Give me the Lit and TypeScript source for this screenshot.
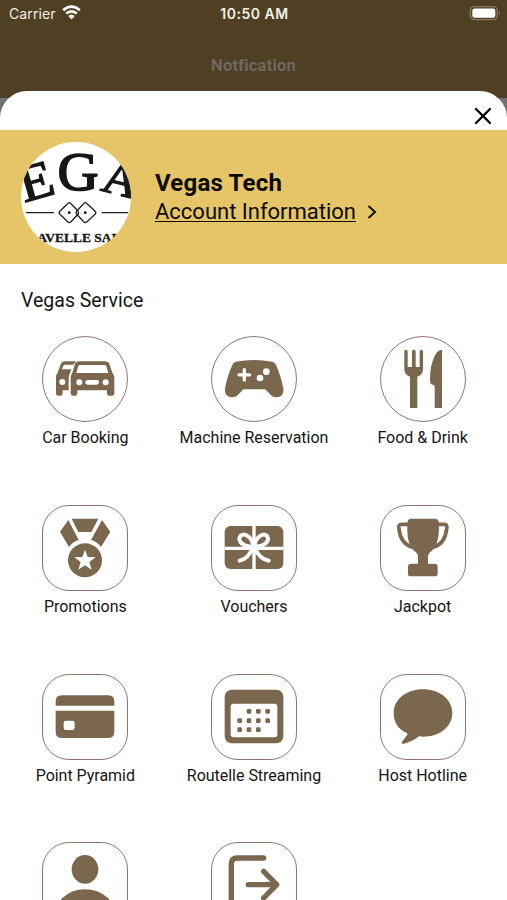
import { LitElement, html, svg, css, nothing, type SVGTemplateResult } from "lit";
import { customElement, property } from "lit/decorators.js";

interface Service {
  label?: string;
  round?: boolean;
  viewBox: string;
  art: SVGTemplateResult;
}

const dots = [
  [657, 138], [685, 138], [713, 138],
  [629, 166], [657, 166], [685, 166], [713, 166],
  [629, 193], [657, 193], [685, 193],
];

const services: Service[] = [
  {
    label: "Car Booking",
    round: true,
    viewBox: "37 19 258 258",
    art: svg`
      <path class="ink" d="M139 95H107Q97 95 93 104L84 129Q79 134 79 143V190Q79 198 86 198H93Q99 198 99 190V182H117V147Q117 138 121 131L125 119H97L101 108Q103 105 107 105H131Z"/>
      <circle class="paper" cx="98" cy="157" r="9"/>
      <path class="ink" fill-rule="evenodd" d="M149 95H225Q236 95 240 105L248 129Q254 135 254 144V190Q254 198 247 198H239Q232 198 232 190V182H143V190Q143 198 136 198H130Q123 198 123 190V144Q123 135 128 129L135 105Q138 95 149 95ZM151 106Q147 106 146 110L140 130H236L230 110Q229 106 225 106Z"/>
      <circle class="paper" cx="149" cy="158" r="9"/>
      <circle class="paper" cx="228" cy="158" r="9"/>
      <rect class="paper" x="167" y="151" width="41" height="14" rx="7"/>`,
  },
  {
    label: "Machine Reservation",
    round: true,
    viewBox: "123 19 258 258",
    art: svg`
      <path class="ink" d="M197 96Q252 86 307 96Q315 98 318 106Q332 136 340 176Q343 202 320 203Q307 203 300 194L286 179H220L206 194Q199 203 186 203Q162 202 165 176Q173 136 187 106Q190 98 197 96Z"/>
      <path class="cut" stroke-width="10" d="M223 120V151M207 135.500H239"/>
      <circle class="paper" cx="289" cy="126" r="10"/>
      <circle class="paper" cx="270" cy="145" r="10"/>`,
  },
  {
    label: "Food & Drink",
    round: true,
    viewBox: "44 19 258 258",
    art: svg`
      <path class="ink" d="M117 66Q117 60 122 60Q127 60 127 66V112H140V66Q140 60 145.500 60Q151 60 151 66V112H163V66Q163 60 168 60Q173 60 173 66V118Q173 135 156 141V235H134V141Q117 135 117 118Z"/>
      <path class="ink" d="M230 61V235H208V168L197 163Q194 160 194 150Q194 105 209 77Q218 60 230 61Z"/>`,
  },
  {
    label: "Promotions",
    viewBox: "37 21 258 258",
    art: svg`
      <path class="ink" d="M126 62H206L185 102H146ZM116 66L147 126Q130 131 118 147L91 101ZM217 66L242 101L214 147Q202 131 184 126Z"/>
      <circle class="ink" cx="166" cy="187" r="51"/>
      <path class="paper" d="M166 155L174 177L198 178L179 192L186 215L166 202L146 215L153 192L134 178L158 177Z"/>`,
  },
  {
    label: "Vouchers",
    viewBox: "33 21 258 258",
    art: svg`
      <rect class="ink" x="74" y="84" width="176" height="129" rx="17"/>
      <path class="cut butt" stroke-width="10" d="M162 84V213M74 151H250"/>
      <path class="ink" d="M125 116Q127 112 136 115Q151 121 155 141Q132 143 124 128Q121 121 125 116ZM197 116Q195 112 188 115Q173 121 169 141Q191 143 199 128Q202 121 197 116Z"/>
      <path class="cut" stroke-width="12" d="M159 146Q133 146 122 133Q114 122 122 113Q132 105 146 116Q158 126 160 145Q146 182 119 188M165 146Q190 146 200 133Q208 122 200 113Q190 105 177 116Q165 126 163 145Q176 182 206 188"/>`,
  },
  {
    label: "Jackpot",
    viewBox: "44 21 258 258",
    art: svg`
      <path class="line" stroke-width="11" d="M132 79H108Q98 79 101 93Q106 138 142 148M213 79H237Q247 79 244 93Q239 138 203 148"/>
      <path class="ink" d="M127 70Q128 62 137 62H210Q218 62 220 70Q225 135 200 158Q188 165 188 176V197H208Q217 197 217 206V229Q217 235 211 235H134Q128 235 128 229V206Q128 197 138 197H158V176Q158 165 146 158Q121 135 127 70Z"/>`,
  },
  {
    label: "Point Pyramid",
    viewBox: "37 26 258 258",
    art: svg`
      <path class="ink" d="M78 121V108Q78 90 96 90H236Q254 90 254 108V121ZM78 136H254V199Q254 218 235 218H97Q78 218 78 199Z"/>
      <rect class="paper" x="102" y="166" width="33" height="28" rx="7"/>`,
  },
  {
    label: "Routelle Streaming",
    viewBox: "543 26 258 258",
    art: svg`
      <rect class="ink" x="584" y="73" width="176" height="161" rx="21"/>
      <rect class="paper" x="602" y="115" width="140" height="101" rx="9"/>
      ${dots.map(([x, y]) => svg`<rect class="ink" x=${x - 7} y=${y - 7} width="14" height="14" rx="4"/>`)}`,
  },
  {
    label: "Host Hotline",
    viewBox: "1049 26 258 258",
    art: svg`
      <path class="ink" d="M1178 72C1228 72 1266 103 1266 143C1266 184 1228 214 1178 214L1166 213Q1145 230 1120 235Q1112 236 1115 229L1131 208L1131 204C1104 193 1090 170 1090 143C1090 103 1128 72 1178 72Z"/>`,
  },
  {
    viewBox: "37 532 258 258",
    art: svg`
      <ellipse class="ink" cx="166" cy="614" rx="40" ry="43"/>
      <path class="ink" d="M86 738Q86 714 97 701Q125 674 166 674Q207 674 236 701Q247 714 247 738Z"/>`,
  },
  {
    viewBox: "543 532 258 258",
    art: svg`
      <path class="line" stroke-width="16" d="M701 580H622Q604 580 604 598V722Q604 740 622 740H701M655 660H740M701 620L740 660L701 700"/>`,
  },
];

@customElement("service-tile")
export class ServiceTile extends LitElement {
  @property({ attribute: false }) service!: Service;

  static styles = css`
    :host { display: flex; flex-direction: column; align-items: center; }
    .frame {
      box-sizing: border-box;
      width: 86px;
      height: 86px;
      border: 1.3px solid #94736f;
      border-radius: 27px;
    }
    .round { border-radius: 50%; }
    .icon { display: block; width: 86px; height: 86px; margin: -1px; }
    .ink { fill: #7a674d; }
    .paper { fill: #fff; }
    .cut, .line { fill: none; stroke: #fff; stroke-linecap: round; stroke-linejoin: round; }
    .line { stroke: #7a674d; }
    .butt { stroke-linecap: butt; }
    .label {
      margin-top: 6px;
      font-size: 16px;
      line-height: 20px;
      letter-spacing: -0.02px;
      color: #151515;
      white-space: nowrap;
    }
  `;

  render() {
    const s = this.service;
    return html`
      <div class="frame ${s.round ? "round" : ""}">
        <svg class="icon" viewBox=${s.viewBox}>${s.art}</svg>
      </div>
      ${s.label ? html`<div class="label">${s.label}</div>` : nothing}
    `;
  }
}

@customElement("app-root")
export class AppRoot extends LitElement {
  static styles = css`
    :host {
      display: flex;
      flex-direction: column;
      box-sizing: border-box;
      width: 100%;
      height: 900px;
      overflow: hidden;
      background: linear-gradient(#4f4024 98.500px, #747172 98.500px);
      font-family: Roboto, sans-serif;
      color: #0c0b06;
    }
    .status {
      display: grid;
      grid-template-columns: 1fr auto 1fr;
      align-items: center;
      height: 27px;
      flex: none;
      padding: 0 7px 0 9px;
      font-family: Inter, sans-serif;
      font-size: 14px;
      color: #f4efe5;
    }
    .carrier { display: flex; align-items: center; gap: 6px; letter-spacing: 0.1px; }
    .wifi { width: 19px; height: 15px; margin-top: -2px; }
    .time { font-weight: 600; letter-spacing: 0.5px; }
    .battery { justify-self: end; width: 32px; height: 16px; margin: -1px -1px 0 0; }
    .nav {
      flex: none;
      height: 64px;
      box-sizing: border-box;
      padding-top: 29px;
      text-align: center;
      font-size: 16.500px;
      line-height: 20px;
      font-weight: 600;
      letter-spacing: 0.2px;
      color: #716b62;
    }
    .sheet {
      flex: 1;
      min-height: 0;
      overflow: hidden;
      background: #fff;
      border-radius: 27px 27px 0 0;
    }
    .top { display: flex; justify-content: flex-end; height: 39px; }
    .close { width: 18px; height: 18px; margin: 15.500px 15.500px 0 0; }
    .account {
      display: flex;
      align-items: center;
      gap: 24px;
      height: 134px;
      padding-left: 21px;
      background: #e5c568;
    }
    .avatar { width: 110px; height: 110px; }
    .serif { font-family: "Liberation Serif", serif; fill: #17171a; }
    .name { font-size: 24px; line-height: 28px; font-weight: 700; letter-spacing: 0.2px; }
    .link { display: flex; align-items: center; gap: 11px; margin-top: 1px; font-size: 22px; line-height: 28px; }
    .linktext {
      letter-spacing: -0.01px;
      text-decoration: underline;
      text-decoration-thickness: 1px;
      text-underline-offset: 2px;
      text-decoration-skip-ink: none;
    }
    .chevron { width: 10px; height: 16px; }
    .heading {
      padding: 25px 0 0 21px;
      font-size: 19.500px;
      line-height: 24px;
      color: #151515;
    }
    .grid {
      display: grid;
      grid-template-columns: repeat(3, 168.670px);
      grid-auto-rows: 168.670px;
      margin: 23.300px 0 0 1px;
    }
  `;

  render() {
    return html`
      <div class="status">
        <div class="carrier">
          <span>Carrier</span>
          <svg class="wifi" viewBox="0 0 19 15" fill="none" stroke="#fff" stroke-width="2.600">
            <path d="M1.200 5.300Q9.500 -2 17.800 5.300M4.200 8.600Q9.500 4 14.800 8.600"/>
            <path d="M6.300 11Q9.500 8 12.700 11L9.500 14.500Z" fill="#fff" stroke="none"/>
          </svg>
        </div>
        <div class="time">10:50 AM</div>
        <svg class="battery" viewBox="0 0 32 16">
          <rect x="1.300" y="1.600" width="27" height="13" rx="4" fill="none" stroke="#847a5e" stroke-width="1.300"/>
          <rect x="3.300" y="3.500" width="23" height="9.300" rx="2.300" fill="#fff"/>
          <path d="M30 6Q32 8 30 10Z" fill="#847a5e"/>
        </svg>
      </div>
      <div class="nav">Notfication</div>
      <div class="sheet">
        <div class="top">
          <svg class="close" viewBox="0 0 18 18" stroke="#000" stroke-width="2.300" stroke-linecap="round">
            <path d="M2 2L16 16M16 2L2 16"/>
          </svg>
        </div>
        <div class="account">
          <svg class="avatar" viewBox="63 50 330 330">
            <clipPath id="disc"><circle cx="228" cy="215" r="165"/></clipPath>
            <circle cx="228" cy="215" r="165" fill="#fff"/>
            <g clip-path="url(#disc)">
              <g class="serif" text-anchor="middle">
                <text font-size="156" stroke="#17171a" stroke-width="4" transform="translate(122 217) rotate(-16) scale(1.080 1)">E</text>
                <text font-size="164" stroke="#17171a" stroke-width="5" transform="translate(234 194) scale(1.040 1)">G</text>
                <text font-size="142" stroke="#17171a" stroke-width="4" transform="translate(352 208) rotate(14) scale(1.080 1)">A</text>
                <text x="112" y="351" font-size="37" font-weight="700" text-anchor="start" stroke="#17171a" stroke-width="1" textLength="238" lengthAdjust="spacingAndGlyphs">AVELLE SAI</text>
              </g>
              <g fill="none" stroke="#222" stroke-width="4" stroke-linejoin="round">
                <path d="M78 262H162M305 262H384"/>
                <path d="M203 235Q208 229 213 235L234 257Q237 262 234 267L213 289Q208 295 203 289L180 267Q175 262 180 257Z"/>
                <path d="M251 235Q256 229 261 235L285 257Q290 262 285 267L261 289Q256 295 251 289L230 267Q227 262 230 257Z"/>
              </g>
              <circle cx="208" cy="262" r="4"/>
              <circle cx="256" cy="262" r="4"/>
            </g>
          </svg>
          <div>
            <div class="name">Vegas Tech</div>
            <div class="link">
              <span class="linktext">Account Information</span>
              <svg class="chevron" viewBox="0 0 10 16" fill="none" stroke="#111" stroke-width="2">
                <path d="M1.500 2L8 8L1.500 14"/>
              </svg>
            </div>
          </div>
        </div>
        <div class="heading">Vegas Service</div>
        <div class="grid">
          ${services.map((s) => html`<service-tile .service=${s}></service-tile>`)}
        </div>
      </div>
    `;
  }
}
